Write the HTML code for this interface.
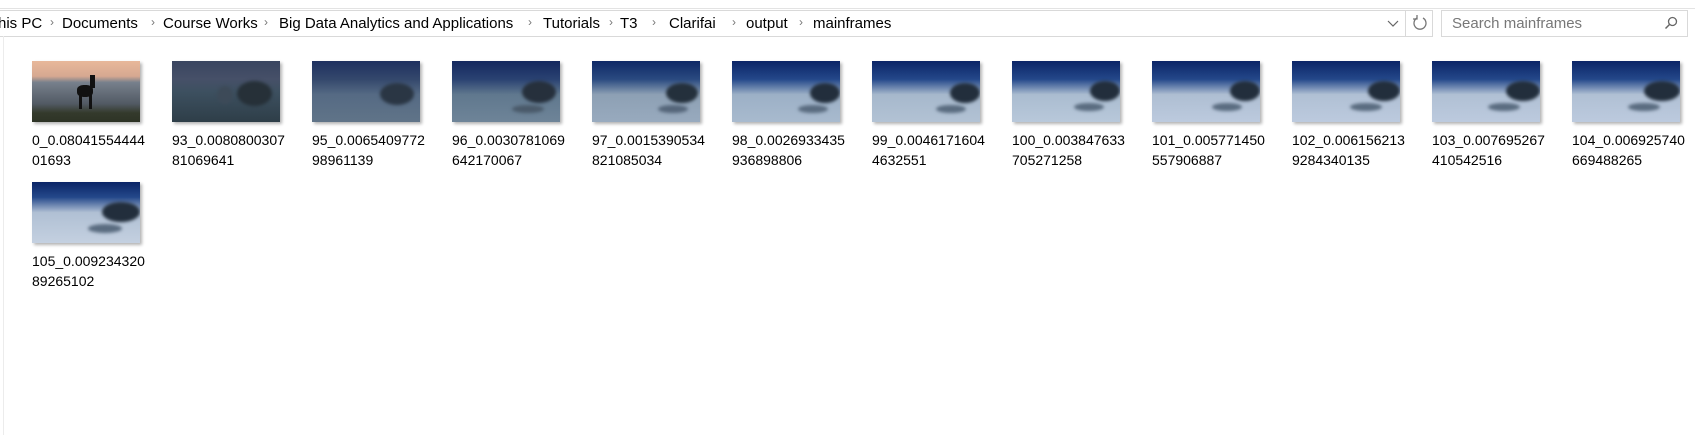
<!DOCTYPE html>
<html><head><style>
body{margin:0;width:1695px;height:435px;background:#fff;position:relative;overflow:hidden;font-family:"Liberation Sans",sans-serif;color:#000}
.a{position:absolute}
.bc{position:absolute;top:15px;font-size:15px;white-space:nowrap}
.ch{position:absolute;top:15px;font-size:12px;color:#777}
.it{position:absolute;width:140px}
.th{position:absolute;left:0;top:0;width:108px;height:61px;box-shadow:2px 2px 3px rgba(0,0,0,.3);overflow:hidden}
.tx{position:absolute;left:0;top:69px;font-size:14px;line-height:20px;white-space:nowrap}
.tu{position:absolute;border-radius:50%;background:#1c2a38;filter:blur(1.5px)}
</style></head><body>
<div class="a" style="left:0;top:8px;width:1695px;height:1px;background:#e3e3e3"></div>
<div class="a" style="left:-1px;top:10px;width:1432px;height:25px;border:1px solid #d9d9d9"></div>
<div class="a" style="left:1405px;top:11px;width:1px;height:25px;background:#d9d9d9"></div>
<div class="a" style="left:1441px;top:10px;width:245px;height:25px;border:1px solid #d9d9d9"></div>
<div class="bc" style="left:-2px">his PC</div>
<div class="ch" style="left:50px">›</div>
<div class="bc" style="left:62px">Documents</div>
<div class="ch" style="left:151px">›</div>
<div class="bc" style="left:163px">Course Works</div>
<div class="ch" style="left:264px">›</div>
<div class="bc" style="left:279px">Big Data Analytics and Applications</div>
<div class="ch" style="left:528px">›</div>
<div class="bc" style="left:543px">Tutorials</div>
<div class="ch" style="left:609px">›</div>
<div class="bc" style="left:620px">T3</div>
<div class="ch" style="left:652px">›</div>
<div class="bc" style="left:669px">Clarifai</div>
<div class="ch" style="left:732px">›</div>
<div class="bc" style="left:746px">output</div>
<div class="ch" style="left:799px">›</div>
<div class="bc" style="left:813px">mainframes</div>
<svg class="a" style="left:1387px;top:18px" width="12" height="10"><path d="M1 3 L6 8 L11 3" stroke="#666" fill="none" stroke-width="1.2"/></svg>
<svg class="a" style="left:1411px;top:14px" width="18" height="18"><path d="M6 4 A6 6 0 1 0 12 4" stroke="#777" fill="none" stroke-width="1.3"/><path d="M6 1 L6 5 L2 5" stroke="#777" fill="none" stroke-width="1.3"/></svg>
<div class="bc" style="left:1452px;color:#777">Search mainframes</div>
<svg class="a" style="left:1664px;top:16px" width="14" height="14"><circle cx="8.5" cy="5.5" r="4" stroke="#666" fill="none" stroke-width="1.3"/><path d="M5.5 8.5 L1.5 12.5" stroke="#666" stroke-width="1.5"/></svg>
<div class="a" style="left:3px;top:36px;width:1px;height:399px;background:#ececec"></div>

<div class="it" style="left:32px;top:61px"><div class="th" style="background:linear-gradient(#e8b89a 0%,#d6a891 25%,#77808c 35%,#525a64 70%,#343a2c 85%,#2d3325 100%)"><div class="a" style="left:45px;top:24px;width:16px;height:12px;background:#111;border-radius:40%"></div><div class="a" style="left:47px;top:32px;width:3px;height:16px;background:#111"></div><div class="a" style="left:57px;top:32px;width:3px;height:16px;background:#111"></div><div class="a" style="left:58px;top:14px;width:5px;height:13px;background:#111"></div></div><div class="tx">0_0.08041554444<br>01693</div></div>

<div class="it" style="left:172px;top:61px"><div class="th" style="background:linear-gradient(#3a4560 0%,#465068 30%,#3d5060 50%,#2e3e48 100%)"><div class="tu" style="left:65px;top:20px;width:35px;height:25px;background:#263038"></div><div class="tu" style="left:45px;top:25px;width:16px;height:18px;background:#3d4a58"></div></div><div class="tx">93_0.0080800307<br>81069641</div></div>

<div class="it" style="left:312px;top:61px"><div class="th" style="background:linear-gradient(#1e3060 0%,#34486c 30%,#556a84 55%,#607488 100%)"><div class="tu" style="left:68px;top:22px;width:34px;height:22px;background:#2a3644"></div></div><div class="tx">95_0.0065409772<br>98961139</div></div>

<div class="it" style="left:452px;top:61px"><div class="th" style="background:linear-gradient(#14285e 0%,#2a4272 30%,#60788e 55%,#6e8498 100%)"><div class="tu" style="left:70px;top:20px;width:34px;height:22px;background:#26303c"></div><div class="tu" style="left:60px;top:44px;width:32px;height:8px;background:#4a5a6a"></div></div><div class="tx">96_0.0030781069<br>642170067</div></div>

<div class="it" style="left:592px;top:61px"><div class="th" style="background:linear-gradient(#0e2866 0%,#2a4a80 30%,#8da0b4 55%,#98aabe 100%)"><div class="tu" style="left:74px;top:22px;width:32px;height:20px;background:#24303c"></div><div class="tu" style="left:66px;top:44px;width:30px;height:8px;background:#55667a"></div></div><div class="tx">97_0.0015390534<br>821085034</div></div>

<div class="it" style="left:732px;top:61px"><div class="th" style="background:linear-gradient(#0a2466 0%,#24488a 30%,#9cb0c6 55%,#a8bace 100%)"><div class="tu" style="left:78px;top:22px;width:30px;height:20px;background:#222e3c"></div><div class="tu" style="left:66px;top:44px;width:30px;height:8px;background:#5a6c80"></div></div><div class="tx">98_0.0026933435<br>936898806</div></div>

<div class="it" style="left:872px;top:61px"><div class="th" style="background:linear-gradient(#0a2466 0%,#24488a 30%,#a6b8cc 55%,#b2c2d4 100%)"><div class="tu" style="left:78px;top:22px;width:30px;height:20px;background:#222e3c"></div><div class="tu" style="left:64px;top:44px;width:30px;height:8px;background:#5a6c80"></div></div><div class="tx">99_0.0046171604<br>4632551</div></div>

<div class="it" style="left:1012px;top:61px"><div class="th" style="background:linear-gradient(#0a2466 0%,#24488a 30%,#aabcd0 55%,#b8c8da 100%)"><div class="tu" style="left:78px;top:20px;width:30px;height:20px;background:#222e3c"></div><div class="tu" style="left:62px;top:42px;width:30px;height:8px;background:#5a6c80"></div></div><div class="tx">100_0.003847633<br>705271258</div></div>

<div class="it" style="left:1152px;top:61px"><div class="th" style="background:linear-gradient(#0a2466 0%,#24488a 30%,#aebed2 55%,#bccade 100%)"><div class="tu" style="left:78px;top:20px;width:30px;height:20px;background:#222e3c"></div><div class="tu" style="left:60px;top:42px;width:30px;height:8px;background:#5a6c80"></div></div><div class="tx">101_0.005771450<br>557906887</div></div>

<div class="it" style="left:1292px;top:61px"><div class="th" style="background:linear-gradient(#0a2466 0%,#24488a 30%,#b0c0d4 55%,#bccade 100%)"><div class="tu" style="left:76px;top:20px;width:32px;height:20px;background:#222e3c"></div><div class="tu" style="left:58px;top:42px;width:32px;height:8px;background:#5a6c80"></div></div><div class="tx">102_0.006156213<br>9284340135</div></div>

<div class="it" style="left:1432px;top:61px"><div class="th" style="background:linear-gradient(#0a2466 0%,#24488a 30%,#b0c0d4 55%,#bccade 100%)"><div class="tu" style="left:74px;top:20px;width:34px;height:20px;background:#222e3c"></div><div class="tu" style="left:56px;top:42px;width:32px;height:8px;background:#5a6c80"></div></div><div class="tx">103_0.007695267<br>410542516</div></div>

<div class="it" style="left:1572px;top:61px"><div class="th" style="background:linear-gradient(#0a2466 0%,#24488a 30%,#b0c0d4 55%,#bccade 100%)"><div class="tu" style="left:72px;top:20px;width:36px;height:20px;background:#222e3c"></div><div class="tu" style="left:56px;top:42px;width:32px;height:8px;background:#5a6c80"></div></div><div class="tx">104_0.006925740<br>669488265</div></div>

<div class="it" style="left:32px;top:182px"><div class="th" style="background:linear-gradient(#0a2466 0%,#24488a 25%,#b0c0d4 50%,#c4d0e0 100%)"><div class="tu" style="left:70px;top:20px;width:38px;height:20px;background:#222e3c"></div><div class="tu" style="left:56px;top:42px;width:34px;height:9px;background:#5a6c80"></div></div><div class="tx">105_0.009234320<br>89265102</div></div>
</body></html>
